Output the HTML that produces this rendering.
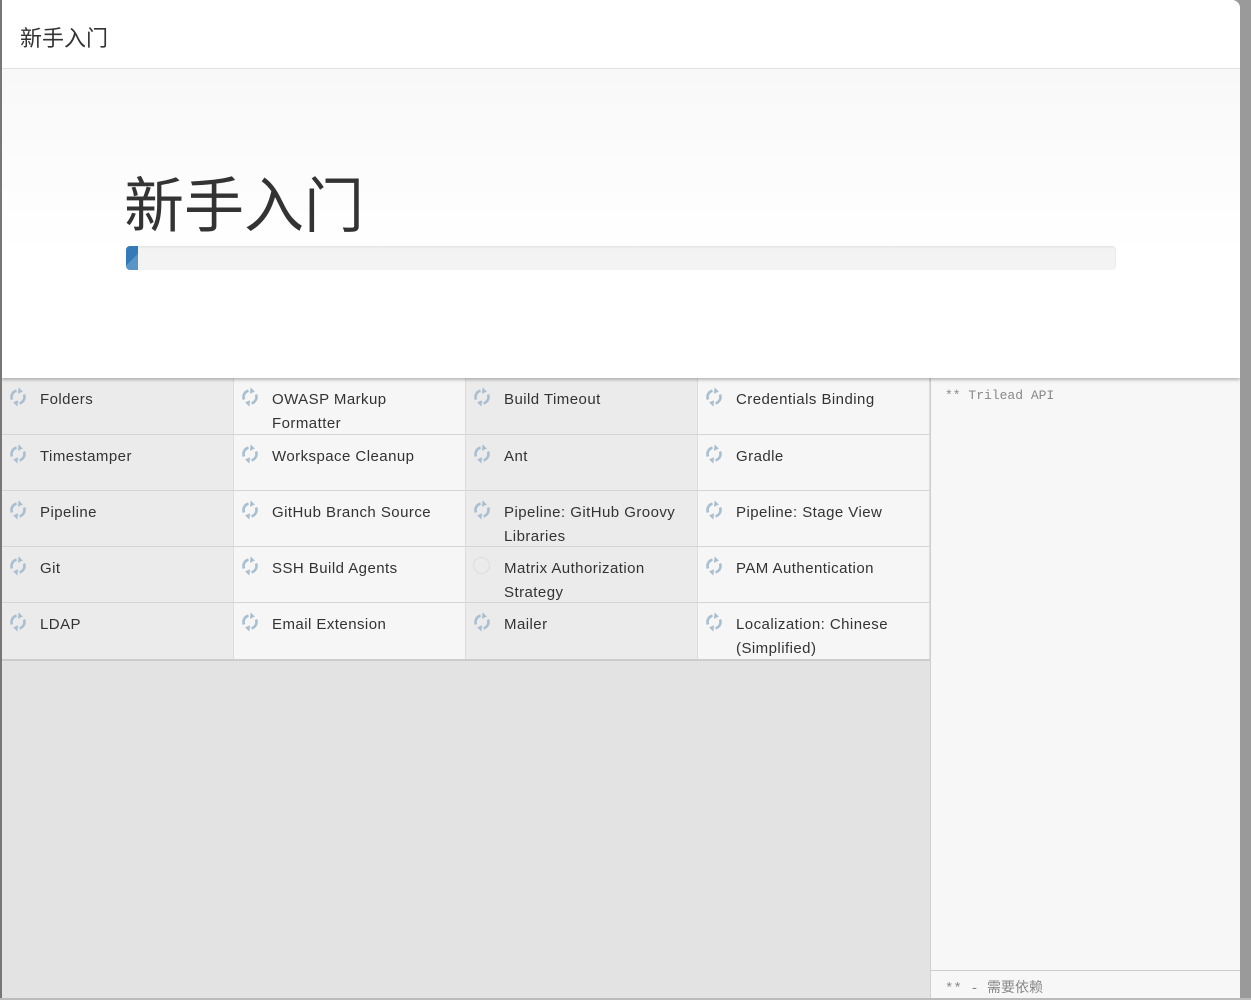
<!DOCTYPE html>
<html><head><meta charset="utf-8"><style>
*{box-sizing:border-box;margin:0;padding:0}
body{width:1251px;height:1000px;overflow:hidden;background:#9a9a9a;font-family:"Liberation Sans","Noto Sans CJK SC",sans-serif;position:relative}
.lb{position:absolute;left:0;top:0;width:2px;height:1000px;background:#777}
.panel{position:absolute;left:2px;top:0;width:1238px;height:998px;background:#e3e3e3;border-radius:0 8px 0 0;overflow:hidden}
.hdr{height:69px;background:#fff;border-bottom:1px solid #e5e5e5;font-size:22px;color:#333;padding:21px 0 0 18px}
.jumbo{height:309px;background:linear-gradient(#f8f8f8,#fff 60%);position:relative;box-shadow:0 2px 3px rgba(0,0,0,.25);z-index:2}
.jumbo h1{position:absolute;left:122px;top:98px;font-size:60px;font-weight:normal;color:#333;line-height:80px}
.bar{position:absolute;left:124px;top:177px;width:990px;height:24px;background:#f3f3f3;border-radius:4px;box-shadow:inset 0 1px 2px rgba(0,0,0,.08);overflow:hidden}
.bar i{position:absolute;left:0;top:0;width:12px;height:24px;background:linear-gradient(135deg,#337ab7 55%,#5a95c8 55%)}
.grid{position:absolute;left:0;top:378px;width:928px}
.row{display:flex;border-bottom:1px solid #d5d5d5}
.c{width:232px;position:relative;padding:10px 8px 0 38px;font-size:15px;letter-spacing:0.45px;line-height:24px;color:#333;border-right:1px solid #dcdcdc}
.c:nth-child(odd){background:#ebebeb}.c:nth-child(even){background:#f6f6f6}
.c svg{position:absolute;left:6px;top:9px}
.rad{position:absolute;left:7px;top:10px;width:17px;height:17px;border:1.5px solid #ddd;border-radius:50%}
.side{position:absolute;left:928px;top:378px;width:310px;height:620px;background:#f7f7f7;border-left:1px solid #d0d0d0;font-family:"Liberation Mono","Noto Sans CJK SC",monospace;font-size:13px;color:#888}
.side .t{position:absolute;left:14px;top:10px}
.side .f{position:absolute;left:0;top:592px;width:100%;border-top:1px solid #ccc;padding:6px 0 0 14px;font-size:14px}
.bot{position:absolute;left:0;top:998px;width:1251px;height:2px;background:#bbb}
</style></head><body>
<div class="lb"></div>
<div class="panel">
<div class="hdr">新手入门</div>
<div class="jumbo"><h1>新手入门</h1><div class="bar"><i></i></div></div>
<div class="grid">
<div class="row" style="height:57px"><div class="c">Folders</div><div class="c">OWASP Markup Formatter</div><div class="c">Build Timeout</div><div class="c">Credentials Binding</div></div>
<div class="row" style="height:56px"><div class="c">Timestamper</div><div class="c">Workspace Cleanup</div><div class="c">Ant</div><div class="c">Gradle</div></div>
<div class="row" style="height:56px"><div class="c">Pipeline</div><div class="c">GitHub Branch Source</div><div class="c">Pipeline: GitHub Groovy Libraries</div><div class="c">Pipeline: Stage View</div></div>
<div class="row" style="height:56px"><div class="c">Git</div><div class="c">SSH Build Agents</div><div class="c"><span class="rad"></span>Matrix Authorization Strategy</div><div class="c">PAM Authentication</div></div>
<div class="row" style="height:58px;border-bottom:2px solid #ccc"><div class="c">LDAP</div><div class="c">Email Extension</div><div class="c">Mailer</div><div class="c">Localization: Chinese (Simplified)</div></div>
</div>
<div class="side"><div class="t">** Trilead API</div><div class="f">** - 需要依赖</div></div>
</div>
<div class="bot"></div>
<script>
document.querySelectorAll('.c').forEach(function(c){if(c.querySelector('.rad'))return;c.insertAdjacentHTML('afterbegin','<svg width="20" height="20" viewBox="0 0 20 20" fill="none" stroke="#a9bfcf" stroke-width="2.6"><path d="M4 12.5A6.5 6.5 0 0 1 8.5 3.7"/><path d="M16 7.5A6.5 6.5 0 0 1 11.5 16.3"/><path d="M11 1.5l3 3-3.5 1.5z" fill="#a9bfcf" stroke-width="1"/><path d="M9 18.5l-3-3 3.5-1.5z" fill="#a9bfcf" stroke-width="1"/></svg>');});
</script>
</body></html>
